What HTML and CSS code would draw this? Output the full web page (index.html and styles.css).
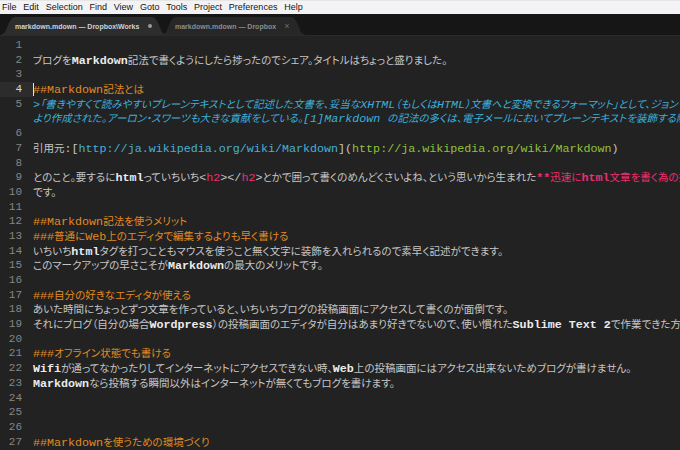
FILE: index.html
```html
<!DOCTYPE html>
<html lang="ja">
<head>
<meta charset="utf-8">
<link rel="stylesheet" href="styles.css">
</head>
<body>
<div class="menubar">
  <span>File</span><span>Edit</span><span>Selection</span><span>Find</span><span>View</span><span>Goto</span><span>Tools</span><span>Project</span><span>Preferences</span><span>Help</span>
</div>
<div class="tabbar">
  <div class="tab active"><span class="tabname">markdown.mdown — Dropbox\Works</span><span class="dot"></span></div>
  <div class="tab second"><span class="tabname">markdown.mdown — Dropbox</span><span class="close">×</span></div>
</div>
<div class="editor">
  <div class="row"><span class="ln">1</span><span class="tx"></span></div>
  <div class="row"><span class="ln">2</span><span class="tx">ブログを<span class="w">Markdown</span>記法で書くようにしたら捗ったのでシェア。タイトルはちょっと盛りました。</span></div>
  <div class="row"><span class="ln">3</span><span class="tx"></span></div>
  <div class="row cur"><span class="ln">4</span><span class="tx o"><span class="caret"></span><span class="m">##Markdown</span>記法とは</span></div>
  <div class="row"><span class="ln">5</span><span class="tx c"><span class="m">&gt;</span>「書きやすくて読みやすいプレーンテキストとして記述した文書を、妥当な<span class="m">XHTML</span>（もしくは<span class="m">HTML</span>）文書へと変換できるフォーマット」として、ジョン・グルーバーに</span></div>
  <div class="row"><span class="ln"></span><span class="tx c">より作成された。アーロン・スワーツも大きな貢献をしている。<span class="m">[1]Markdown  </span>の記法の多くは、電子メールにおいてプレーンテキストを装飾する際の慣習から</span></div>
  <div class="row"><span class="ln">6</span><span class="tx"></span></div>
  <div class="row"><span class="ln">7</span><span class="tx">引用元<span class="m">:[</span><span class="m cy">http://ja.wikipedia.org/wiki/Markdown</span><span class="m">](</span><span class="m g">http://ja.wikipedia.org/wiki/Markdown</span><span class="m">)</span></span></div>
  <div class="row"><span class="ln">8</span><span class="tx"></span></div>
  <div class="row"><span class="ln">9</span><span class="tx">とのこと。要するに<span class="w">html</span>っていちいち<span class="m">&lt;</span><span class="m p">h2</span><span class="m">&gt;&lt;/</span><span class="m p">h2</span><span class="m">&gt;</span>とかで囲って書くのめんどくさいよね、という思いから生まれた<span class="p"><span class="m b">**</span>迅速に<span class="m b">html</span>文章を書く為の技術<span class="m b">**</span></span></span></div>
  <div class="row"><span class="ln">10</span><span class="tx">です。</span></div>
  <div class="row"><span class="ln">11</span><span class="tx"></span></div>
  <div class="row"><span class="ln">12</span><span class="tx o"> <span class="m">##Markdown</span>記法を使うメリット</span></div>
  <div class="row"><span class="ln">13</span><span class="tx o"><span class="m">###</span>普通に<span class="m">Web</span>上のエディタで編集するよりも早く書ける</span></div>
  <div class="row"><span class="ln">14</span><span class="tx">いちいち<span class="w">html</span>タグを打つこともマウスを使うこと無く文字に装飾を入れられるので素早く記述ができます。</span></div>
  <div class="row"><span class="ln">15</span><span class="tx">このマークアップの早さこそが<span class="w">Markdown</span>の最大のメリットです。</span></div>
  <div class="row"><span class="ln">16</span><span class="tx"></span></div>
  <div class="row"><span class="ln">17</span><span class="tx o"><span class="m">###</span>自分の好きなエディタが使える</span></div>
  <div class="row"><span class="ln">18</span><span class="tx">あいた時間にちょっとずつ文章を作っていると、いちいちブログの投稿画面にアクセスして書くのが面倒です。</span></div>
  <div class="row"><span class="ln">19</span><span class="tx">それにブログ（自分の場合<span class="w">Wordpress</span>）の投稿画面のエディタが自分はあまり好きでないので、使い慣れた<span class="w">Sublime Text 2</span>で作業できた方が楽です。</span></div>
  <div class="row"><span class="ln">20</span><span class="tx"></span></div>
  <div class="row"><span class="ln">21</span><span class="tx o"><span class="m">###</span>オフライン状態でも書ける</span></div>
  <div class="row"><span class="ln">22</span><span class="tx"><span class="w">Wifi</span>が通ってなかったりしてインターネットにアクセスできない時、<span class="w">Web</span>上の投稿画面にはアクセス出来ないためブログが書けません。</span></div>
  <div class="row"><span class="ln">23</span><span class="tx"><span class="w">Markdown</span>なら投稿する瞬間以外はインターネットが無くてもブログを書けます。</span></div>
  <div class="row"><span class="ln">24</span><span class="tx"></span></div>
  <div class="row"><span class="ln">25</span><span class="tx"></span></div>
  <div class="row"><span class="ln">26</span><span class="tx"></span></div>
  <div class="row"><span class="ln">27</span><span class="tx o"><span class="m">##Markdown</span>を使うための環境づくり</span></div>
</div>
</body>
</html>
```
FILE: styles.css
```css
html, body {
  margin: 0;
  padding: 0;
}
body {
  width: 680px;
  height: 450px;
  overflow: hidden;
  background: #222222;
}
.menubar {
  height: 14px;
  background: #f3f3f5;
  box-shadow: inset 0 1px 0 #e6e6e6;
  display: flex;
  align-items: center;
  gap: 6.8px;
  padding-left: 2px;
  font-family: "Liberation Sans", sans-serif;
  font-size: 9px;
  color: #141414;
}
.tabbar {
  height: 22px;
  background: #161616;
  display: flex;
  align-items: flex-end;
  border-bottom: 1px solid #2a2a2a;
  box-sizing: border-box;
}
.tab {
  height: 18px;
  background: #2b2b2b;
  display: flex;
  align-items: center;
  white-space: nowrap;
  font-family: "Liberation Sans", sans-serif;
  font-weight: bold;
  font-size: 7px;
  box-sizing: border-box;
  clip-path: polygon(0 100%, 4px 85%, 8px 30%, 11px 5%, 14px 0, calc(100% - 14px) 0, calc(100% - 11px) 5%, calc(100% - 8px) 30%, calc(100% - 4px) 85%, 100% 100%);
}
.tab.active {
  width: 165px;
  margin-left: 1px;
  padding-left: 14px;
  color: #d2d2d2;
  background: #2d2d2d;
}
.tab.second {
  width: 143px;
  margin-left: -4px;
  padding-left: 13px;
  color: #8c8c8c;
  background: #272727;
}
.dot {
  flex: none;
  width: 4px;
  height: 4px;
  border-radius: 50%;
  background: #9a9a9a;
  margin-left: 9px;
}
.close {
  margin-left: 8px;
  font-size: 9px;
  font-weight: normal;
  color: #707070;
}
.editor {
  padding-top: 2px;
  font-family: "Noto Sans CJK JP", sans-serif;
  font-size: 10.5px;
  font-feature-settings: "palt";
  color: #c6c6c6;
}
.row {
  display: flex;
  height: 14.7px;
  line-height: 14.7px;
  white-space: nowrap;
}
.ln {
  flex: none;
  width: 22px;
  padding-right: 11px;
  text-align: right;
  font-family: "Liberation Mono", monospace;
  font-size: 11px;
  color: #868686;
}
.row.cur .ln {
  background: #2c2c2c;
  color: #d4d4d4;
}
.tx {
  flex: 1;
  overflow: hidden;
  position: relative;
}
.caret {
  position: absolute;
  left: 0;
  top: 1px;
  width: 1px;
  height: 13px;
  background: #e0e0e0;
}
.m {
  font-family: "Liberation Mono", monospace;
  font-size: 11.7px;
}
.w {
  font-family: "Liberation Mono", monospace;
  font-size: 11.7px;
  font-weight: bold;
  color: #ececec;
}
.b {
  font-weight: bold;
}
.o {
  color: #e08a22;
}
.c {
  color: #3cb0dc;
  font-style: italic;
}
.cy {
  color: #48b0da;
}
.g {
  color: #93c13a;
}
.p {
  color: #ee2e6e;
}
```
